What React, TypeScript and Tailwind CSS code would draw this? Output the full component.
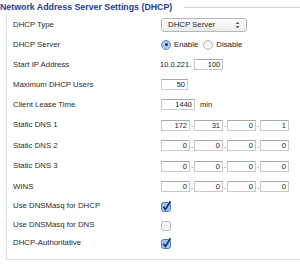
import React from "react";

const Field = ({ value, w = "w-[29px]" }: { value: string; w?: string }) => (
    <div className={`${w} h-[11px] border border-[#c9c9c9] border-t-[#a9a9a9] bg-white text-right pr-[2px] leading-[9px] text-[7.5px] text-[#222]`}>
        {value}
    </div>
);

const Ip = ({ parts }: { parts: string[] }) => (
    <div className="flex items-center">
        {parts.map((p, i) => (
            <React.Fragment key={i}>
                {i > 0 && <span className="w-[4px] text-center text-[8px] leading-none text-[#333]">.</span>}
                <Field value={p} />
            </React.Fragment>
        ))}
    </div>
);

const Check = ({ on }: { on: boolean }) => (
    <svg width="12" height="12" viewBox="0 0 12 12">
        <rect x="0.5" y="2.5" width="9" height="9" rx="2" fill={on ? "#9cc3f0" : "#f4f4f4"} stroke={on ? "#4f7fc1" : "#b5b5b5"} />
        {on && <path d="M2.3 6.8 L4.4 9.3 L9.6 1.2" fill="none" stroke="#1d2f66" strokeWidth="1.6" />}
    </svg>
);

const Radio = ({ on }: { on: boolean }) => (
    <span className={`w-[10px] h-[10px] rounded-full border flex items-center justify-center ${on ? "border-[#5a8ad0] bg-[#a9cbf3]" : "border-[#b3b3b3] bg-[#f6f6f6]"}`}>
        {on && <span className="w-[3px] h-[3px] rounded-full bg-[#1b2b55]" />}
    </span>
);

const Row = ({ label, h, children }: { label: string; h: string; children?: React.ReactNode }) => (
    <div className={`flex items-center ${h}`}>
        <div className="w-[148px] text-[7.8px] text-[#2a2a2a]">{label}</div>
        <div className="flex items-center">{children}</div>
    </div>
);

export default function App() {
    return (
        <div className="w-[300px] h-[268px] bg-white overflow-hidden" style={{ fontFamily: '"Liberation Sans", Arial, sans-serif' }}>
            <div className="flex items-center pt-[2px] h-[13px]">
                <span className="text-[8.8px] font-bold text-[#1e3d8f] whitespace-nowrap">Network Address Server Settings (DHCP)</span>
                <div className="flex-1 ml-[12px] border-t border-[#d6d6d6]" />
            </div>
            <div className="ml-[6px] mt-[1px] h-[246px] border-l border-b border-[#dcdcdc] pl-[6px] pt-[1px]">
                <Row label="DHCP Type" h="h-[20px]">
                    <div className="w-[86px] h-[14px] rounded-[3px] border border-[#b8b8b8] bg-gradient-to-b from-white to-[#ececec] flex items-center justify-between pl-[6px] pr-[6px] text-[7.8px] text-[#222]">
                        <span>DHCP Server</span>
                        <svg width="5" height="8" viewBox="0 0 5 8">
                            <path d="M0.5 3 L2.5 0.8 L4.5 3 Z M0.5 5 L2.5 7.2 L4.5 5 Z" fill="#555" />
                        </svg>
                    </div>
                </Row>
                <Row label="DHCP Server" h="h-[19px]">
                    <Radio on />
                    <span className="ml-[3px] text-[7.8px] text-[#222]">Enable</span>
                    <span className="ml-[5px]"><Radio on={false} /></span>
                    <span className="ml-[3px] text-[7.8px] text-[#222]">Disable</span>
                </Row>
                <Row label="Start IP Address" h="h-[21px]">
                    <span className="text-[7.5px] text-[#222] mr-[3px] -ml-[1px]">10.0.221.</span>
                    <Field value="100" />
                </Row>
                <Row label="Maximum DHCP Users" h="h-[19px]">
                    <Field value="50" w="w-[27px]" />
                </Row>
                <Row label="Client Lease Time" h="h-[21px]">
                    <Field value="1440" w="w-[34px]" />
                    <span className="ml-[5px] text-[7.5px] text-[#222]">min</span>
                </Row>
                <Row label="Static DNS 1" h="h-[20px]">
                    <Ip parts={["172", "31", "0", "1"]} />
                </Row>
                <Row label="Static DNS 2" h="h-[21px]">
                    <Ip parts={["0", "0", "0", "0"]} />
                </Row>
                <Row label="Static DNS 3" h="h-[20px]">
                    <Ip parts={["0", "0", "0", "0"]} />
                </Row>
                <Row label="WINS" h="h-[21px]">
                    <Ip parts={["0", "0", "0", "0"]} />
                </Row>
                <Row label="Use DNSMasq for DHCP" h="h-[18px]">
                    <Check on />
                </Row>
                <Row label="Use DNSMasq for DNS" h="h-[19px]">
                    <Check on={false} />
                </Row>
                <Row label="DHCP-Authoritative" h="h-[18px]">
                    <Check on />
                </Row>
            </div>
        </div>
    );
}
